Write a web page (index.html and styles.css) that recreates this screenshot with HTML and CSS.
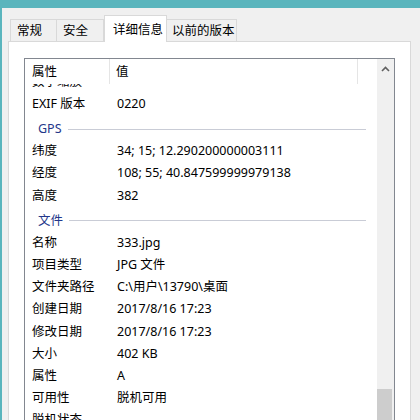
FILE: index.html
```html
<!DOCTYPE html>
<html lang="zh-CN">
<head>
<meta charset="utf-8">
<title>属性</title>
<link rel="stylesheet" href="styles.css">
</head>
<body>
<div class="titlebar"></div>
<div class="frame">
  <div class="tabs">
    <div class="tab t1">常规</div>
    <div class="tab t2">安全</div>
    <div class="tab t3 active">详细信息</div>
    <div class="tab t4">以前的版本</div>
  </div>
  <div class="panel">
    <div class="list">
      <div class="content">
        <div class="header">
          <div class="hcol1">属性</div>
          <div class="hcol2">值</div>
          <div class="hcol3"></div>
        </div>
        <div class="body">
          <div class="row first"><span class="k">数字缩放</span><span class="v"></span></div>
          <div class="row"><span class="k">EXIF 版本</span><span class="v">0220</span></div>
          <div class="group"><span class="gt">GPS</span><span class="gl"></span></div>
          <div class="row"><span class="k">纬度</span><span class="v">34; 15; 12.290200000003111</span></div>
          <div class="row"><span class="k">经度</span><span class="v">108; 55; 40.847599999979138</span></div>
          <div class="row"><span class="k">高度</span><span class="v">382</span></div>
          <div class="group"><span class="gt">文件</span><span class="gl"></span></div>
          <div class="row"><span class="k">名称</span><span class="v">333.jpg</span></div>
          <div class="row"><span class="k">项目类型</span><span class="v">JPG 文件</span></div>
          <div class="row"><span class="k">文件夹路径</span><span class="v">C:\用户\13790\桌面</span></div>
          <div class="row"><span class="k">创建日期</span><span class="v">2017/8/16 17:23</span></div>
          <div class="row"><span class="k">修改日期</span><span class="v">2017/8/16 17:23</span></div>
          <div class="row"><span class="k">大小</span><span class="v">402 KB</span></div>
          <div class="row"><span class="k">属性</span><span class="v">A</span></div>
          <div class="row"><span class="k">可用性</span><span class="v">脱机可用</span></div>
          <div class="row"><span class="k">脱机状态</span><span class="v"></span></div>
        </div>
      </div>
      <div class="scrollbar">
        <div class="arrow">
          <svg width="9" height="6" viewBox="0 0 9 6"><path d="M1 5 L4.5 1.5 L8 5" fill="none" stroke="#606060" stroke-width="1.6"/></svg>
        </div>
        <div class="track"></div>
        <div class="thumb"></div>
      </div>
    </div>
  </div>
</div>
</body>
</html>
```

FILE: styles.css
```css
html, body {
  margin: 0;
  padding: 0;
  width: 420px;
  height: 420px;
  overflow: hidden;
}
body {
  background: #f0f0f0;
  font-family: "Noto Sans", "Noto Sans CJK SC", sans-serif;
  font-size: 12.5px;
  color: #000;
}
.titlebar {
  height: 8px;
  background: #5ab5bd;
}
.frame {
  border-left: 2px solid #5ab5bd;
  height: 412px;
  display: flex;
  flex-direction: column;
  overflow: hidden;
}
.tabs {
  height: 33px;
  flex: none;
  display: flex;
  align-items: flex-end;
  padding-left: 8px;
}
.tab {
  height: 22px;
  line-height: 21px;
  box-sizing: border-box;
  border: 1px solid #d9d9d9;
  border-bottom: none;
  background: #f0f0f0;
  padding-left: 6px;
  white-space: nowrap;
}
.tab + .tab {
  border-left: none;
}
.t1 { width: 47px; }
.t2 { width: 47px; }
.t3 { width: 63px; }
.t4 { width: 70px; padding-left: 5px; }
.tab.active {
  height: 27px;
  margin-bottom: -1px;
  background: #fff;
  padding-left: 8px;
  padding-top: 3px;
  border-left: 1px solid #d9d9d9;
  position: relative;
  z-index: 2;
}
.panel {
  margin-left: 6px;
  width: 403px;
  box-sizing: border-box;
  flex: 1;
  min-height: 0;
  overflow: hidden;
  background: #fff;
  border: 1px solid #d9d9d9;
  border-bottom: none;
  padding: 16px 0 0 15px;
  position: relative;
  z-index: 1;
}
.list {
  width: 371px;
  height: 380px;
  box-sizing: border-box;
  border: 1px solid #828790;
  border-bottom: none;
  display: flex;
  background: #fff;
}
.content {
  flex: 1;
  display: flex;
  flex-direction: column;
  overflow: hidden;
}
.header {
  height: 25px;
  display: flex;
  line-height: 25px;
  flex: none;
}
.hcol1 {
  width: 85px;
  padding-left: 7px;
  box-sizing: border-box;
  border-right: 1px solid #e5e5e5;
}
.hcol2 {
  width: 248px;
  padding-left: 6px;
  box-sizing: border-box;
  border-right: 1px solid #e5e5e5;
}
.hcol3 {
  flex: 1;
}
.body {
  flex: 1;
  min-height: 0;
  overflow: hidden;
}
.row {
  height: 22.2px;
  line-height: 22.2px;
  display: flex;
  white-space: nowrap;
}
.row.first {
  margin-top: -13.2px;
}
.k {
  width: 92px;
  padding-left: 7px;
  box-sizing: border-box;
  flex: none;
}
.v {
  flex: 1;
}
.group {
  height: 25px;
  box-sizing: border-box;
  padding-top: 3px;
  line-height: 22px;
  display: flex;
  align-items: center;
  padding-left: 13px;
  padding-right: 11px;
}
.gt {
  color: #23378a;
}
.gl {
  flex: 1;
  height: 1px;
  background: #c9ccd6;
  margin-left: 6px;
}
.scrollbar {
  width: 17px;
  flex: none;
  background: #f0f0f0;
  display: flex;
  flex-direction: column;
}
.arrow {
  height: 17px;
  flex: none;
  display: flex;
  align-items: center;
  justify-content: center;
  padding-top: 3px;
  box-sizing: border-box;
}
.arrow svg {
  display: block;
}
.track {
  height: 313px;
  flex: none;
}
.thumb {
  width: 15px;
  height: 60px;
  flex: none;
  background: #cdcdcd;
}
```
